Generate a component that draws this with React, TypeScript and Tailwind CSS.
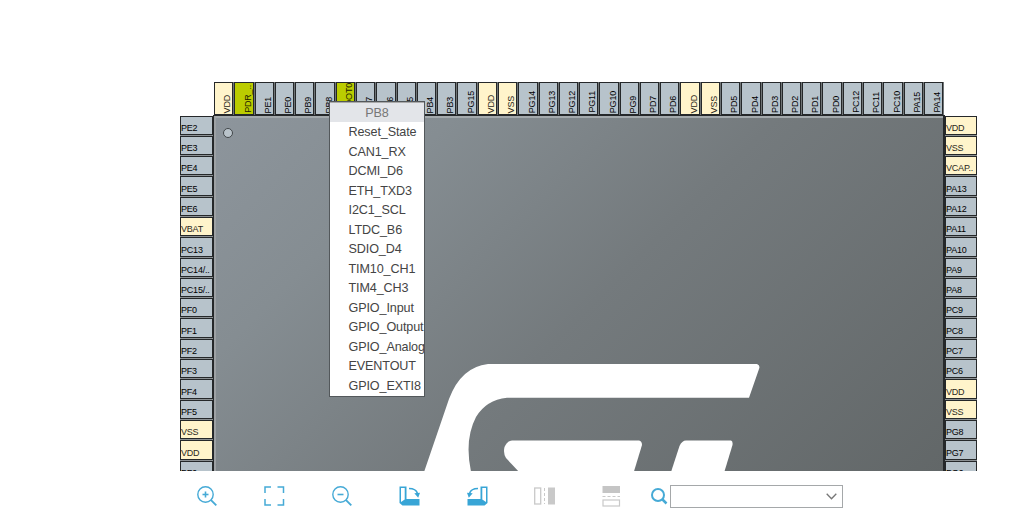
import React from "react";

const TOP = "VDD,PDR_..,PE1,PE0,PB9,PB8,BOOT0,PB7,PB6,PB5,PB4,PB3,PG15,VDD,VSS,PG14,PG13,PG12,PG11,PG10,PG9,PD7,PD6,VDD,VSS,PD5,PD4,PD3,PD2,PD1,PD0,PC12,PC11,PC10,PA15,PA14".split(",");
const LEFT = "PE2,PE3,PE4,PE5,PE6,VBAT,PC13,PC14/..,PC15/..,PF0,PF1,PF2,PF3,PF4,PF5,VSS,VDD,PF6".split(",");
const RIGHT = "VDD,VSS,VCAP..,PA13,PA12,PA11,PA10,PA9,PA8,PC9,PC8,PC7,PC6,VDD,VSS,PG8,PG7,PG6".split(",");
const MENU = "Reset_State,CAN1_RX,DCMI_D6,ETH_TXD3,I2C1_SCL,LTDC_B6,SDIO_D4,TIM10_CH1,TIM4_CH3,GPIO_Input,GPIO_Output,GPIO_Analog,EVENTOUT,GPIO_EXTI8".split(",");

function pinColor(name: string) {
  if (name.startsWith("V")) return "bg-[#fff4cb] text-[#2a271a]";
  if (name.startsWith("PDR") || name.startsWith("BOOT")) return "bg-[#bbcc00] text-[#1c2000]";
  return "bg-[#b7c3cb] text-black";
}

function TopPin({ name }: { name: string }) {
  return (
    <div className="h-full min-w-0 flex-1 bg-[#6f7476] pr-px">
      <div className={`flex h-full items-end justify-end overflow-hidden border border-[#25282a] ${pinColor(name)}`}>
        <span className="-mr-px rotate-180 pt-px text-[9px] leading-[11px] tracking-[-0.2px] whitespace-nowrap [writing-mode:vertical-rl]">{name}</span>
      </div>
    </div>
  );
}

function SidePin({ name }: { name: string }) {
  return (
    <div className="h-[20.3px] shrink-0 bg-[#8b9093] pb-px">
      <div className={`flex h-full items-end overflow-hidden border border-[#25282a] ${pinColor(name)}`}>
        <span className="text-[9px] leading-[12px] tracking-[-0.2px] whitespace-nowrap">{name}</span>
      </div>
    </div>
  );
}

function StLogo() {
  return (
    <svg className="mt-[245px] ml-[206px] block" width="342" height="110" viewBox="422 363 342 110" fill="#fff">
      <path d="M423.700 473 L449 399 Q461 367 488 364 L757 364 Q760.500 365.500 759 369 L749 397.700 L507 397.700 Q486 400 476 417 Q464 440 471.300 473 Z" />
      <path d="M520 473 L506 458 Q503 453 504.500 447 Q507 441 512 440.500 L639 440.500 Q642 441 642 445 L633.500 473 Z" />
      <path d="M670.700 473 L679.500 446 Q682 440.500 686 440.500 L731 440.500 Q733 441 732.500 445 L724 473 Z" />
    </svg>
  );
}

function Magnifier({ plus }: { plus?: boolean }) {
  return (
    <svg width="22" height="22" viewBox="0 0 22 22" fill="none" stroke="#46aad6">
      <circle cx="9.500" cy="9.500" r="7.700" strokeWidth="1.400" />
      <path d="M6.500 9.500h6" strokeWidth="1.600" />
      {plus && <path d="M9.500 6.500v6" strokeWidth="1.600" />}
      <path d="M14.800 14.800l5.500 5.500" strokeWidth="1.900" />
    </svg>
  );
}

function Rotate({ flip }: { flip?: boolean }) {
  return (
    <svg width="22" height="20" viewBox="0 0 22 20" className={flip ? "-scale-x-100" : ""}>
      <path d="M0.500 0.500h7v12.500h13v6.500H3.500L0.500 17z" fill="#38a5d6" />
      <path d="M2 2h3.700v11.500L2 16z" fill="#fff" />
      <path d="M10 2.500q7 0 8.500 5" fill="none" stroke="#38a5d6" strokeWidth="1.500" />
      <path d="M15.300 7.300l5.700-0.600-1.800 5z" fill="#38a5d6" />
    </svg>
  );
}

export default function App() {
  return (
    <div className="h-[517px] w-[1024px] overflow-hidden bg-white font-['Liberation_Sans',Arial,sans-serif]">
      <div className="relative h-[471px] overflow-hidden pt-[82px] pl-[180px]">
        <div className="ml-[34px] flex h-[33px] w-[730px]">
          {TOP.map((n, i) => <TopPin key={i} name={n} />)}
        </div>
        <div className="flex h-[356px]">
          <div className="flex w-[33px] flex-col overflow-hidden pt-[0.500px]">
            {LEFT.map((n) => <SidePin key={n} name={n} />)}
          </div>
          <div className="w-[732px] overflow-hidden border-t border-r-2 border-l border-[#25282a] bg-[#25282a]">
            <div className="relative h-full border-t-2 border-l-2 border-t-[#a4aaad] border-l-[#9da1a4] bg-linear-[135deg,#8d959c_0%,#858d92_22%,#747a7d_52%,#626768_100%]">
              <span className="absolute top-[10px] left-[7px] size-[10px] rounded-full border border-[#42474a] bg-[#b9c3ca]" />
              <StLogo />
            </div>
          </div>
          <div className="flex w-[32px] flex-col overflow-hidden pt-[0.500px]">
            {RIGHT.map((n, i) => <SidePin key={i} name={n} />)}
          </div>
        </div>
        <div className="absolute top-[101px] left-[329px] h-[296px] w-[96px] overflow-hidden border border-[#53585b] bg-white text-[12.600px] tracking-[-0.12px] text-[#444]">
          <div className="h-[20px] border-t border-[#aaa] bg-[#e3e5e9] text-center leading-[20px] text-[#777]">PB8</div>
          {MENU.map((m) => <div key={m} className="h-[19.500px] pl-[18.500px] leading-[20px] whitespace-nowrap">{m}</div>)}
        </div>
      </div>
      <div className="flex h-[46px] items-center pt-[4px] pl-[196px]">
        <div className="w-[67px]"><Magnifier plus /></div>
        <div className="w-[68px]">
          <svg width="22" height="22" viewBox="0 0 22 22" fill="none" stroke="#46aad6" strokeWidth="1.500">
            <path d="M2 8V2h6M14.500 2h6v6M20.500 14v6h-6M8 20H2v-6" />
          </svg>
        </div>
        <div className="w-[68px]"><Magnifier /></div>
        <div className="w-[67px]"><Rotate /></div>
        <div className="w-[68px]"><Rotate flip /></div>
        <div className="w-[68px]">
          <svg width="22" height="20" viewBox="0 0 22 20">
            <rect x="0.700" y="2" width="6" height="16" fill="none" stroke="#c9c9c9" strokeWidth="1.300" />
            <path d="M10.500 2v16" stroke="#c9c9c9" strokeDasharray="3 2" />
            <rect x="14" y="1.500" width="7" height="17" fill="#c9c9c9" />
          </svg>
        </div>
        <div className="w-[48px]">
          <svg width="19" height="22" viewBox="0 0 19 22">
            <rect x="0.500" y="1" width="17.500" height="7" fill="#c5c5c5" />
            <path d="M0.500 11.500H18" stroke="#c9c9c9" strokeDasharray="3 2" />
            <rect x="1" y="15" width="16.500" height="6" fill="none" stroke="#c9c9c9" strokeWidth="1.200" />
          </svg>
        </div>
        <svg width="20" height="20" viewBox="0 0 20 20" fill="none" stroke="#46aad6">
          <circle cx="8" cy="9" r="6" strokeWidth="2" />
          <path d="M12 13l4.500 4.500" strokeWidth="2.500" />
        </svg>
        <div className="mt-px flex h-[23px] w-[173px] items-center justify-end border border-[#a5a8aa] pr-[5px]">
          <svg width="11" height="7" viewBox="0 0 11 7" fill="none" stroke="#777" strokeWidth="1.300"><path d="M0.700 0.700l4.800 5 4.800-5" /></svg>
        </div>
      </div>
    </div>
  );
}
